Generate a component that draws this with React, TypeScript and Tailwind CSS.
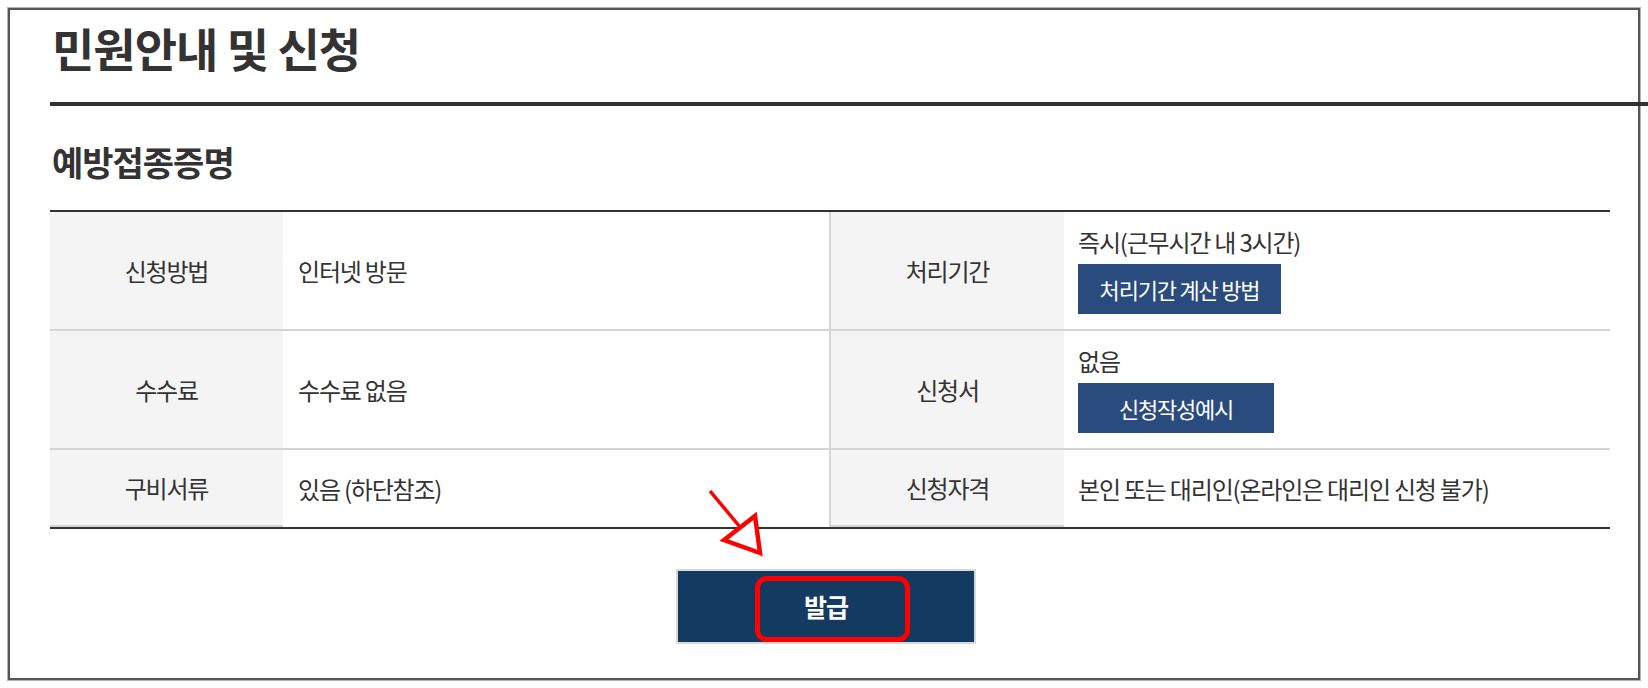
import React from 'react'

const FONT = { fontFamily: '"Noto Sans CJK KR", "Noto Sans", sans-serif' }

type Row = {
  left: { label: string; value: React.ReactNode }
  right: { label: string; value: React.ReactNode }
}

function BlueButton({ children, w }: { children: React.ReactNode; w: string }) {
  return (
    <button
      className={`${w} mt-[7px] h-[50px] bg-[#2a4b7e] text-white text-[22px] tracking-[-1.2px] leading-none flex items-center justify-center`}
    >
      {children}
    </button>
  )
}

const ROWS: Row[] = [
  {
    left: { label: '신청방법', value: '인터넷 방문' },
    right: {
      label: '처리기간',
      value: (
        <>
          <div className="leading-[30px]">즉시(근무시간 내 3시간)</div>
          <BlueButton w="w-[203px]">처리기간 계산 방법</BlueButton>
        </>
      ),
    },
  },
  {
    left: { label: '수수료', value: '수수료 없음' },
    right: {
      label: '신청서',
      value: (
        <>
          <div className="leading-[30px]">없음</div>
          <BlueButton w="w-[196px]">신청작성예시</BlueButton>
        </>
      ),
    },
  },
  {
    left: { label: '구비서류', value: '있음 (하단참조)' },
    right: { label: '신청자격', value: '본인 또는 대리인(온라인은 대리인 신청 불가)' },
  },
]

export default function App() {
  return (
    <div className="bg-white w-[1648px] h-[688px] overflow-hidden text-[#333]" style={FONT}>
      <div className="relative m-2 h-[672px] border-2 border-[#555] shadow-[0_0_0_1px_#b5b5b5] pl-[40px] pr-[28px]">
        {/* ── page title ── */}
        <h1 className="mt-[14px] text-[46px] font-bold leading-none tracking-[-1px] pl-[2px]">민원안내 및 신청</h1>
        <div className="mt-[32px] h-[4px] bg-[#333] -mr-[38px]" />

        {/* ── section ── */}
        <h2 className="mt-[39px] text-[34px] font-bold leading-none tracking-[-1px] pl-[2px]">예방접종증명</h2>

        <div className="mt-[31px] border-t-2 border-b-2 border-t-[#333] border-b-[#333] grid grid-cols-[233px_546px_235px_546px] text-[24px] tracking-[-1.2px]">
          {ROWS.map((row, i) => {
            const last = i === ROWS.length - 1
            const h = last ? 'h-[77px]' : 'h-[119px]'
            const valueBorder = last ? '' : 'border-b-2 border-[#d5d5d5]'
            return (
              <React.Fragment key={row.left.label}>
                <div className={`${h} bg-[#f4f4f4] border-b-2 border-[#d5d5d5] flex items-center justify-center`}>
                  {row.left.label}
                </div>
                <div className={`${h} ${valueBorder} flex items-center px-[15px]`}>{row.left.value}</div>
                <div className={`${h} bg-[#f4f4f4] border-b-2 border-l-2 border-[#d5d5d5] flex items-center justify-center`}>
                  {row.right.label}
                </div>
                <div className={`${h} ${valueBorder} flex flex-col justify-center items-start px-[14px]`}>
                  {row.right.value}
                </div>
              </React.Fragment>
            )
          })}
        </div>

        {/* ── issue button ── */}
        <div className="mt-[40px] flex justify-center pr-[8px]">
          <div className="relative">
            <button className="w-[300px] h-[75px] bg-[#133a61] border-2 border-[#d8d8d8] text-white text-[25px] font-bold tracking-[-1px] flex items-center justify-center">
              발급
            </button>
            <div className="absolute left-[79px] top-[7px] w-[155px] h-[66px] rounded-[12px] border-[5px] border-[#ff0000]" />
          </div>
        </div>

        {/* annotation arrow */}
        <svg className="absolute left-[690px] top-[473px]" width="72" height="78" viewBox="0 0 72 78">
          <line x1="10" y1="8" x2="40" y2="44" stroke="#ff0000" strokeWidth="3.5" />
          <polygon points="60,70 24,57 55,33" fill="#ffffff" stroke="#ff0000" strokeWidth="4.5" strokeLinejoin="miter" />
        </svg>
      </div>
    </div>
  )
}
